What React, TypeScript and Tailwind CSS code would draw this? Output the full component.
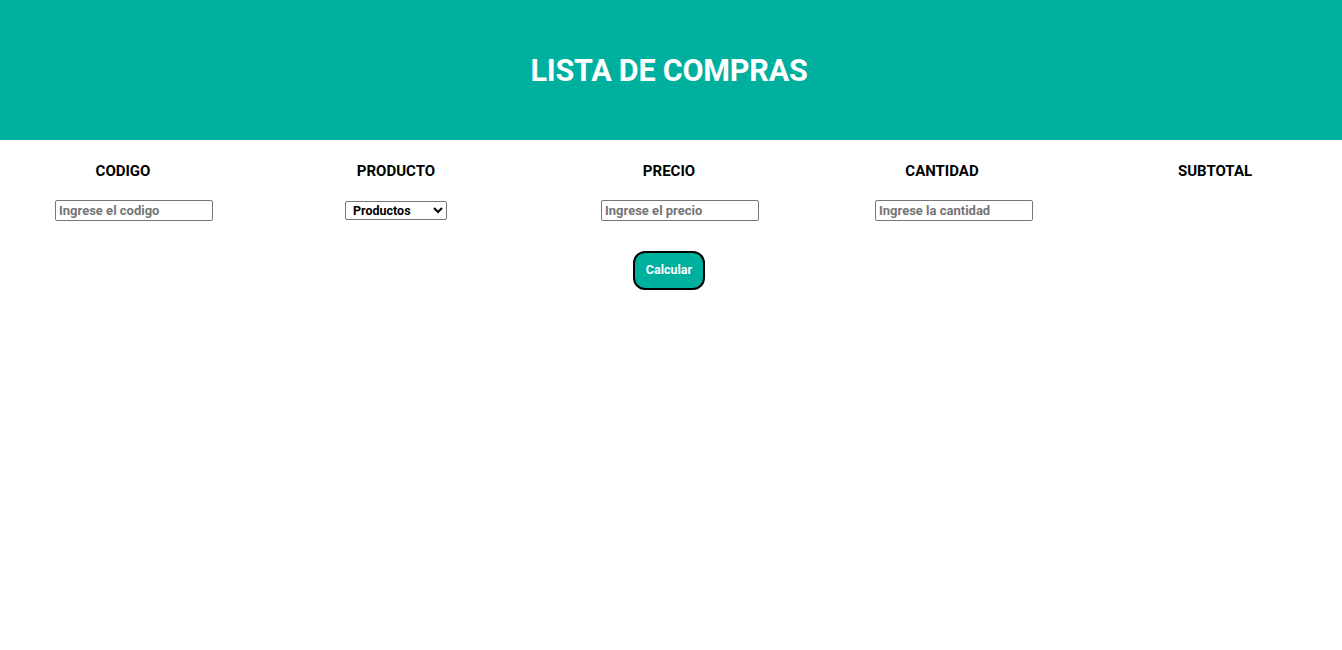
import React from "react";

const font = { fontFamily: "Roboto, 'Liberation Sans', sans-serif" };

export default function App() {
  return (
    <div className="min-h-[650px] bg-white" style={font}>
      <header className="h-[140px] bg-[#00b09e] flex items-center justify-center pr-[4px] pt-[2px]">
        <h1 className="text-[30.5px] font-bold text-white tracking-[-0.2px] leading-none">
          LISTA DE COMPRAS
        </h1>
      </header>
      <div className="grid grid-cols-[repeat(5,246px)] gap-x-[27px] pt-[22px]">
        {["CODIGO", "PRODUCTO", "PRECIO", "CANTIDAD", "SUBTOTAL"].map((h) => (
          <div key={h} className="text-center text-[15px] font-bold text-black leading-[18px]">
            {h}
          </div>
        ))}
        <div className="pt-[18px]">
          <input
            placeholder="Ingrese el codigo"
            className="ml-[55px] w-[158px] h-[21px] border border-[#767676] rounded-[2px] px-[3px] text-[13px] font-bold placeholder:text-[#757575] outline-none"
          />
        </div>
        <div className="pt-[21px] flex justify-center items-start">
          <select className="w-[102px] h-[19px] border border-[#767676] rounded-[2px] pl-[3px] text-[12.5px] font-bold text-black bg-white">
            <option>Productos</option>
          </select>
        </div>
        <div className="pt-[18px]">
          <input
            placeholder="Ingrese el precio"
            className="ml-[55px] w-[158px] h-[21px] border border-[#767676] rounded-[2px] px-[3px] text-[13px] font-bold placeholder:text-[#757575] outline-none"
          />
        </div>
        <div className="pt-[18px]">
          <input
            placeholder="Ingrese la cantidad"
            className="ml-[56px] w-[158px] h-[21px] border border-[#767676] rounded-[2px] px-[3px] text-[13px] font-bold placeholder:text-[#757575] outline-none"
          />
        </div>
        <div />
      </div>
      <div className="flex justify-center pt-[29px] pr-[4px]">
        <button className="w-[72px] h-[39px] rounded-[12px] border-2 border-black bg-[#00b09e] text-white text-[12.5px] font-bold">
          Calcular
        </button>
      </div>
    </div>
  );
}
